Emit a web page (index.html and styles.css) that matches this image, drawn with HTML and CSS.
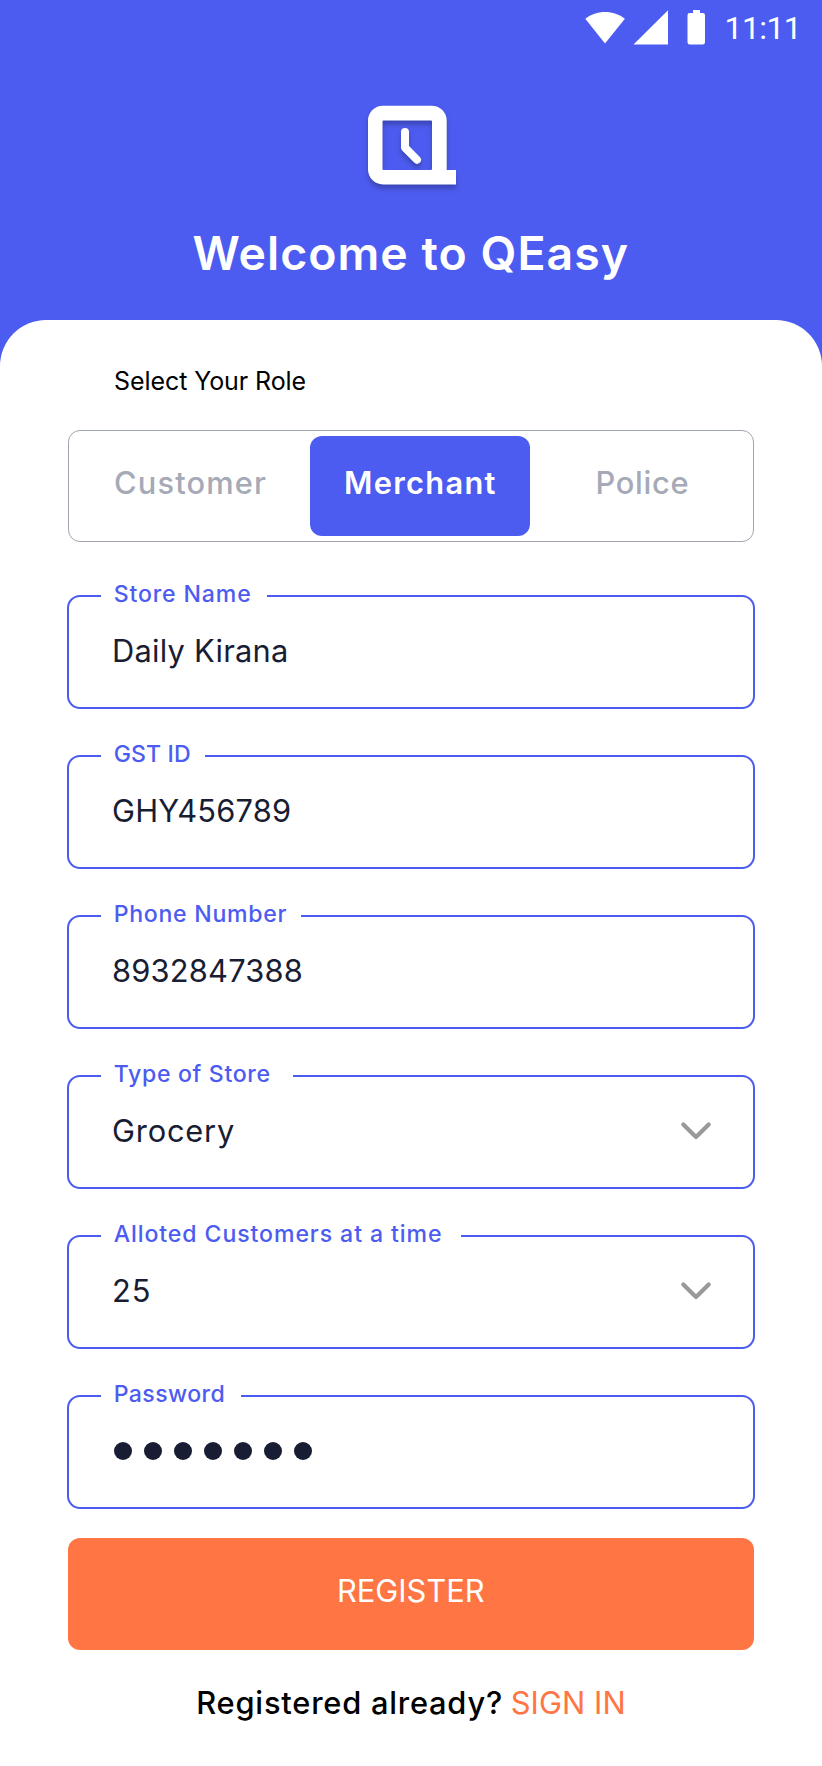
FILE: index.html
```html
<!DOCTYPE html>
<html lang="en">
<head>
<meta charset="utf-8">
<title>QEasy – Register</title>
<link rel="stylesheet" href="styles.css">
</head>
<body>
<div class="screen">
  <header class="header">
    <div class="status-bar">
      <svg class="status-icons" width="122" height="36" viewBox="584 9 122 36" fill="#fff">
        <path d="M605 43.6 585.3 18.8C591 14.2 597.500 12 605 12s14.200 2.200 19.900 6.800Z"/>
        <path d="M668 10.300V44.600H633.500Z"/>
        <path d="M693 10h7v3h2.700a2.300 2.300 0 0 1 2.300 2.300v27a2.300 2.300 0 0 1-2.300 2.300h-12.900a2.300 2.300 0 0 1-2.300-2.300v-27a2.300 2.300 0 0 1 2.300-2.300H693Z"/>
      </svg>
      <time class="clock">11:11</time>
    </div>
    <svg class="logo" width="108" height="100" viewBox="358 96 108 100">
      <path fill="#fff" fill-rule="evenodd" d="M383 105.700h48.700a15 15 0 0 1 15 15V170H456v14.500h-73a15 15 0 0 1-15-15v-48.800a15 15 0 0 1 15-15ZM383.500 120.500a1 1 0 0 0-1 1V169a1 1 0 0 0 1 1H431a1 1 0 0 0 1-1v-47.500a1 1 0 0 0-1-1Z"/>
      <path fill="none" stroke="#fff" stroke-width="8" stroke-linecap="round" stroke-linejoin="round" d="M405 132v15.600l12 12.100"/>
    </svg>
    <h1 class="title">Welcome to QEasy</h1>
  </header>

  <main class="card">
    <h2 class="role-heading">Select Your Role</h2>
    <div class="roles">
      <div class="role role-customer">Customer</div>
      <div class="role role-merchant">Merchant</div>
      <div class="role role-police">Police</div>
    </div>

    <div class="fields">
      <div class="field field-store">
        <span class="label">Store Name</span>
        <span class="value">Daily Kirana</span>
      </div>
      <div class="field field-gst">
        <span class="label">GST ID</span>
        <span class="value">GHY456789</span>
      </div>
      <div class="field field-phone">
        <span class="label">Phone Number</span>
        <span class="value">8932847388</span>
      </div>
      <div class="field field-type">
        <span class="label">Type of Store</span>
        <span class="value">Grocery
          <svg class="chevron" width="32" height="20" viewBox="0 0 32 20"><path d="M3.300 3.500 16 16 28.700 3.500"/></svg>
        </span>
      </div>
      <div class="field field-capacity">
        <span class="label">Alloted Customers at a time</span>
        <span class="value">25
          <svg class="chevron" width="32" height="20" viewBox="0 0 32 20"><path d="M3.300 3.500 16 16 28.700 3.500"/></svg>
        </span>
      </div>
      <div class="field field-password">
        <span class="label">Password</span>
        <span class="dots"><i></i><i></i><i></i><i></i><i></i><i></i><i></i></span>
      </div>
    </div>

    <div class="register">REGISTER</div>
    <p class="signin"><span class="question">Registered already?</span><a class="link">SIGN IN</a></p>
  </main>
</div>
</body>
</html>
```
FILE: styles.css
```css
* { box-sizing: border-box; }

body {
  margin: 0;
  font-family: Inter, "Liberation Sans", sans-serif;
}

.screen {
  width: 822px;
  height: 1766px;
  overflow: hidden;
  background: #4d5cf0;
}

.header {
  display: flex;
  flex-direction: column;
  align-items: center;
  height: 320px;
  color: #fff;
}

.status-bar {
  display: flex;
  align-items: flex-start;
  justify-content: flex-end;
  gap: 18.500px;
  width: 100%;
  height: 96px;
  padding: 9px 17.500px 0 0;
}

.status-icons { flex: none; }

.clock {
  width: 80px;
  font: 400 32px/38px Roboto, sans-serif;
  letter-spacing: -0.600px;
  white-space: nowrap;
}

.logo {
  flex: none;
  margin-left: 2px;
  filter: drop-shadow(0 4px 2.500px rgba(0, 0, 0, 0.25));
}

.title {
  width: 437px;
  margin: 29px 0 0;
  font-size: 46.400px;
  font-weight: 600;
  line-height: 56px;
  letter-spacing: 1.040px;
  white-space: nowrap;
}

.card {
  display: flex;
  flex-direction: column;
  height: 1446px;
  padding: 45px 67px 0;
  border-radius: 46px 46px 0 0;
  background: #fff;
}

.role-heading {
  margin: 0 0 0 47px;
  color: #000;
  font-size: 25px;
  font-weight: 400;
  line-height: 32px;
  letter-spacing: -0.080px;
}

.roles {
  display: flex;
  height: 112px;
  margin: 33px 1px 0;
  padding: 5px;
  border: 1px solid #a0a5b2;
  border-radius: 12px;
}

.role {
  height: 100px;
  color: #a5aab6;
  font-size: 30.800px;
  font-weight: 500;
  line-height: 94px;
}

.role-customer {
  width: 236px;
  padding-left: 40px;
  letter-spacing: 1.150px;
}

.role-merchant {
  width: 220px;
  padding-left: 34px;
  border-radius: 12px;
  background: #4d5cf0;
  color: #fff;
  font-weight: 600;
  letter-spacing: 1.300px;
}

.role-police {
  padding-left: 65.500px;
  letter-spacing: 0.710px;
}

.fields {
  display: flex;
  flex-direction: column;
  gap: 46px;
  margin-top: 53px;
}

.field {
  display: flex;
  flex-direction: column;
  height: 114px;
  border: 2px solid #4d5cf0;
  border-radius: 13px;
}

.label {
  height: 28px;
  margin: -17px 0 0 32px;
  padding-left: 12.700px;
  background: #fff;
  color: #4d5cf0;
  font-size: 23.100px;
  font-weight: 500;
  line-height: 28px;
  white-space: nowrap;
}

.value {
  display: flex;
  align-items: center;
  justify-content: space-between;
  height: 40px;
  margin: 23px 41px 0 43px;
  color: #181d33;
  font-size: 30.800px;
  line-height: 40px;
}

.field-store .label { width: 166px; letter-spacing: 0.850px; }
.field-gst .label { width: 104px; letter-spacing: 0.120px; }
.field-phone .label { width: 200px; letter-spacing: 0.720px; }
.field-type .label { width: 192px; letter-spacing: 0.670px; }
.field-capacity .label { width: 360px; letter-spacing: 0.910px; }
.field-password .label { width: 140px; letter-spacing: 0.400px; }

.field-store .value { letter-spacing: 0.250px; }
.field-gst .value { letter-spacing: 0.200px; }
.field-phone .value { letter-spacing: 0.220px; }
.field-type .value { letter-spacing: 0.810px; }
.field-capacity .value { letter-spacing: 1px; }

.chevron {
  fill: none;
  stroke: #999;
  stroke-width: 4.200px;
  stroke-linecap: round;
  stroke-linejoin: round;
}

.dots {
  display: flex;
  gap: 12px;
  margin: 34px 0 0 45px;
}

.dots i {
  width: 18px;
  height: 18px;
  border-radius: 50%;
  background: #181d33;
}

.register {
  height: 112px;
  margin: 29px 1px 0;
  padding-left: 269px;
  border-radius: 12px;
  background: #ff7544;
  color: #fff;
  font-size: 30.800px;
  line-height: 105px;
}

.signin {
  display: flex;
  margin: 33px 0 0 129.300px;
  color: #000;
  font-size: 30.800px;
  line-height: 40px;
  white-space: nowrap;
}

.question {
  width: 314.400px;
  font-weight: 500;
  letter-spacing: 0.790px;
}

.link {
  color: #ff7544;
  letter-spacing: 0.100px;
}
```
